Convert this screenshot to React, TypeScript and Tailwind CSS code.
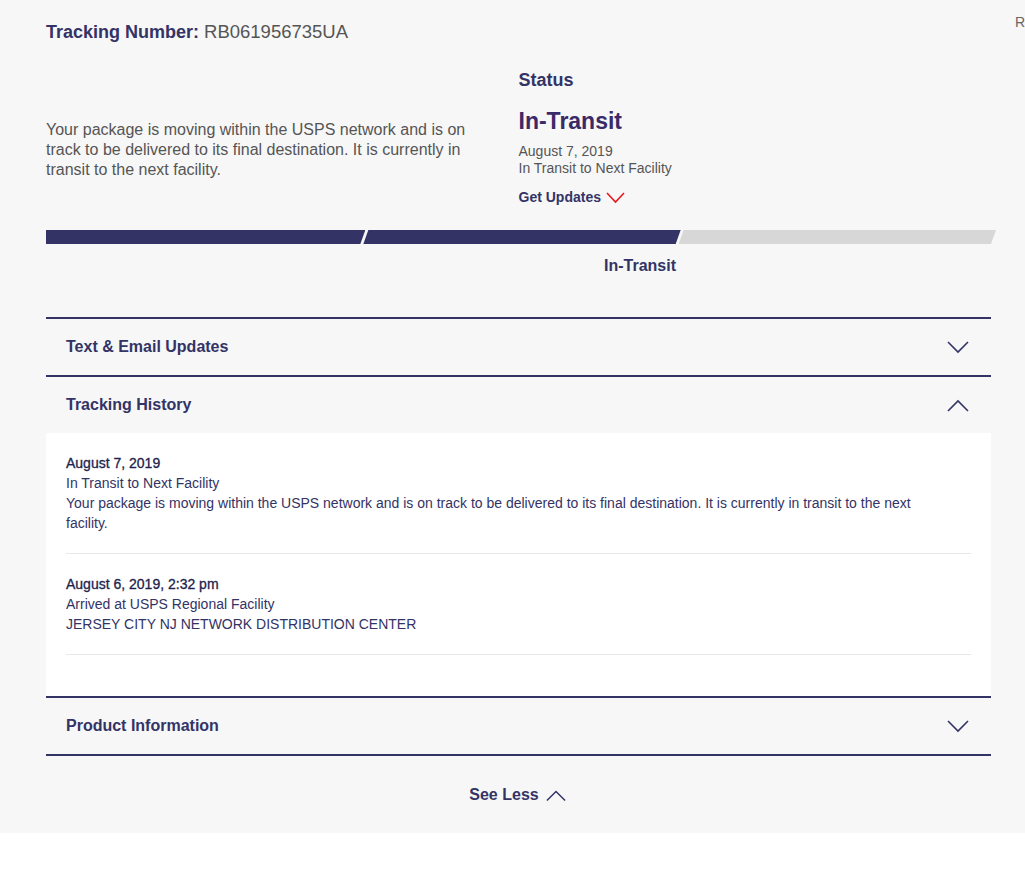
import React from 'react';

const navy = 'text-[#333366]';

function Chevron({ up = false, className = '' }: { up?: boolean; className?: string }) {
  return (
    <svg width="22" height="13" viewBox="0 0 22 13" fill="none" className={className}>
      <polyline
        points={up ? '1,12 11,2 21,12' : '1,1 11,11 21,1'}
        stroke="currentColor"
        strokeWidth="1.6"
      />
    </svg>
  );
}

function AccordionHeader({ title, open = false }: { title: string; open?: boolean }) {
  return (
    <div className="border-t-2 border-[#333366] h-[58px] pl-5 pr-[22px] flex items-center justify-between">
      <span className={`text-[16px] leading-5 font-bold ${navy}`}>{title}</span>
      <Chevron up={open} className="text-[#333366]" />
    </div>
  );
}

const history = [
  {
    date: 'August 7, 2019',
    lines: [
      'In Transit to Next Facility',
      'Your package is moving within the USPS network and is on track to be delivered to its final destination. It is currently in transit to the next facility.',
    ],
  },
  {
    date: 'August 6, 2019, 2:32 pm',
    lines: ['Arrived at USPS Regional Facility', 'JERSEY CITY NJ NETWORK DISTRIBUTION CENTER'],
  },
];

export default function App() {
  return (
    <div className="w-[1025px] min-h-[870px] bg-white overflow-hidden font-[family-name:Liberation_Sans,Arial,sans-serif]">
      <div className="bg-[#f7f7f7] pt-[21px] pb-[28px]">
        <div className="flex pl-[46px] h-[22px] items-center">
          <div className="w-[969px] shrink-0 text-[18px] leading-[22px]">
            <span className={`font-bold ${navy}`}>Tracking Number: </span>
            <span className="text-[#555] text-[18.5px]">RB061956735UA</span>
          </div>
          <span className="shrink-0 text-[14px] text-[#666] -mt-[20px]">Remove</span>
        </div>

        <div className="ml-[46px] mr-[34px]">
          <div className="grid grid-cols-2 mt-[26px]">
            <p className="w-[440px] mt-[51px] text-[16px] leading-5 text-[#555]">
              Your package is moving within the USPS network and is on track to be delivered to its
              final destination. It is currently in transit to the next facility.
            </p>
            <div>
              <div className={`text-[18px] leading-[22px] font-bold ${navy}`}>Status</div>
              <div className="mt-[16px] text-[23px] leading-[28px] font-bold text-[#3b2a68]">In-Transit</div>
              <div className="mt-[8px] text-[14px] leading-[17px] text-[#555]">
                <div>August 7, 2019</div>
                <div>In Transit to Next Facility</div>
              </div>
              <div className="mt-[12px] flex items-center gap-[5px]">
                <span className={`text-[14px] leading-[17px] font-bold ${navy}`}>Get Updates</span>
                <svg width="19" height="12" viewBox="0 0 19 12" fill="none">
                  <polyline points="1,1 9.5,10 18,1" stroke="#e71921" strokeWidth="1.6" />
                </svg>
              </div>
            </div>
          </div>

          <div className="mt-[24px] flex h-[14px] w-[950px]">
            <div className="w-[320px] bg-[#333366] [clip-path:polygon(0_0,100%_0,calc(100%-5px)_100%,0_100%)]" />
            <div className="w-[318px] -ml-[2px] bg-[#333366] [clip-path:polygon(5px_0,100%_0,calc(100%-5px)_100%,0_100%)]" />
            <div className="w-[318px] -ml-[2px] bg-[#d7d7d7] [clip-path:polygon(5px_0,100%_0,calc(100%-5px)_100%,0_100%)]" />
          </div>
          <div className={`mt-[12px] w-[630px] text-right text-[16px] leading-5 font-bold ${navy}`}>
            In-Transit
          </div>

          <div className="mt-[41px]">
            <AccordionHeader title="Text & Email Updates" />
            <AccordionHeader title="Tracking History" open />
            <div className="bg-white px-5 pb-[41px]">
              {history.map((item) => (
                <div key={item.date} className="py-5 border-b border-[#e8e8e8] text-[14px] leading-5">
                  <div className="text-[#22224a] [-webkit-text-stroke:0.3px_#22224a]">{item.date}</div>
                  {item.lines.map((l) => (
                    <div key={l} className="max-w-[860px] text-[#333366]">
                      {l}
                    </div>
                  ))}
                </div>
              ))}
            </div>
            <AccordionHeader title="Product Information" />
            <div className="border-t-2 border-[#333366]" />
          </div>

          <div className="mt-[29px] flex items-center justify-center gap-[7px] pr-[2px]">
            <span className={`text-[16px] leading-5 font-bold ${navy}`}>See Less</span>
            <Chevron up className="text-[#333366] w-[20px]" />
          </div>
        </div>
      </div>
    </div>
  );
}
